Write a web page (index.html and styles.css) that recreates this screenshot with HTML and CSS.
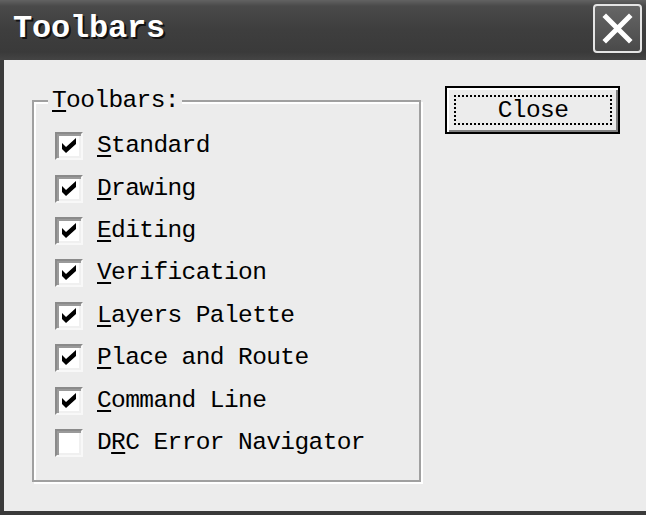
FILE: index.html
```html
<!DOCTYPE html>
<html>
<head>
<meta charset="utf-8">
<link rel="stylesheet" href="styles.css">
</head>
<body>
<div class="window">
  <div class="titlebar">
    <span class="title">Toolbars</span>
    <div class="xbtn">
      <svg width="45" height="45" viewBox="0 0 45 45"><path d="M11 11 L34 34 M34 11 L11 34" stroke="#fff" stroke-width="5" stroke-linecap="square"/></svg>
    </div>
  </div>
  <div class="content">
    <div class="group">
      <span class="legend"><u>T</u>oolbars:</span>
      <div class="list">
        <div class="row"><span class="cb on"></span><span class="lbl"><u>S</u>tandard</span></div>
        <div class="row"><span class="cb on"></span><span class="lbl"><u>D</u>rawing</span></div>
        <div class="row"><span class="cb on"></span><span class="lbl"><u>E</u>diting</span></div>
        <div class="row"><span class="cb on"></span><span class="lbl"><u>V</u>erification</span></div>
        <div class="row"><span class="cb on"></span><span class="lbl"><u>L</u>ayers Palette</span></div>
        <div class="row"><span class="cb on"></span><span class="lbl"><u>P</u>lace and Route</span></div>
        <div class="row"><span class="cb on"></span><span class="lbl"><u>C</u>ommand Line</span></div>
        <div class="row"><span class="cb"></span><span class="lbl">D<u>R</u>C Error Navigator</span></div>
      </div>
    </div>
    <div class="btn"><span class="focus">Close</span></div>
  </div>
</div>
</body>
</html>
```

FILE: styles.css
```css
html, body {
  margin: 0;
  padding: 0;
  background: #ececec;
}
.window {
  width: 646px;
  height: 515px;
  box-sizing: border-box;
  border-left: 4px solid #3a3a3a;
  border-bottom: 4px solid #3a3a3a;
  background: #ececec;
  display: flex;
  flex-direction: column;
  font-family: "Liberation Mono", monospace;
}
.titlebar {
  height: 60px;
  margin-left: -4px;
  flex: none;
  display: flex;
  justify-content: space-between;
  align-items: flex-start;
  background: linear-gradient(to bottom, #626262 0px, #4a4a4a 6px, #3e3e3e 30px, #3a3a3a 52px, #444 60px);
}
.title {
  margin: 12px 0 0 13px;
  font-family: "Liberation Mono", monospace;
  font-weight: bold;
  font-size: 32px;
  line-height: 34px;
  letter-spacing: -0.2px;
  color: #fff;
  text-shadow: 2px 2px 0 #111;
}
.xbtn {
  margin: 4px 4px 0 0;
  width: 49px;
  height: 49px;
  box-sizing: border-box;
  border: 2px solid #e4e4e4;
  border-radius: 4px;
  background: linear-gradient(to bottom, #666, #4a4a4a);
  display: flex;
  align-items: center;
  justify-content: center;
}
.content {
  display: flex;
  align-items: flex-start;
  padding: 40px 0 0 28px;
  gap: 24px;
}
.group {
  width: 389px;
  height: 382px;
  box-sizing: border-box;
  border: 2px solid #a0a0a0;
  box-shadow: inset 2px 2px 0 #fff, 2px 2px 0 #fff;
  flex: none;
}
.legend {
  display: inline-block;
  margin: -14px 0 0 14px;
  padding: 0 3px 0 4px;
  background: #ececec;
  font-size: 24.5px;
  line-height: 26px;
  letter-spacing: -0.6px;
  color: #000;
  vertical-align: top;
}
u {
  text-decoration-thickness: 2px;
  text-underline-offset: 3px;
}
.list {
  margin-top: 5px;
  padding-left: 21px;
  display: flex;
  flex-direction: column;
}
.row {
  height: 42.43px;
  display: flex;
  align-items: center;
  gap: 14px;
}
.cb {
  width: 28px;
  height: 28px;
  box-sizing: border-box;
  flex: none;
  background: #fff;
  border: 2px solid;
  border-color: #8a8a8a #f8f8f8 #f8f8f8 #8a8a8a;
  box-shadow: inset 2px 2px 0 #9a9a9a, inset -2px -2px 0 #f0f0f0;
}
.cb.on {
  background: #fff url("data:image/svg+xml;utf8,<svg xmlns='http://www.w3.org/2000/svg' width='24' height='24' viewBox='0 0 24 24'><path d='M5 9 L9 13 L19 4 L19 10 L9 19 L5 15 Z' fill='black'/></svg>") no-repeat center;
}
.lbl {
  font-size: 24.5px;
  line-height: 28px;
  letter-spacing: -0.6px;
  color: #000;
  white-space: pre;
}
.btn {
  margin-top: -14px;
  width: 175px;
  height: 48px;
  box-sizing: border-box;
  border: 2px solid #000;
  box-shadow: inset 2px 2px 0 #fff, inset -2px -2px 0 #808080;
  background: #ececec;
  padding: 7px 6px 7px 7px;
  flex: none;
}
.focus {
  display: flex;
  align-items: center;
  justify-content: center;
  height: 100%;
  box-sizing: border-box;
  border: 2px dotted #000;
  font-size: 24.5px;
  letter-spacing: -0.6px;
  color: #000;
}
```
